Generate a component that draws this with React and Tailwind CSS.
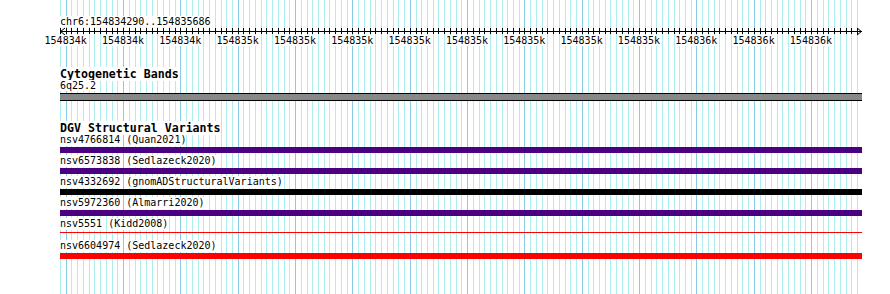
import React from "react"

// 10bp per minor gridline, 100bp per major one
const START_X = 60
const STEP = 5.734
const LINE_COUNT = 140

const tickLabels = [
  "154834k", "154834k", "154834k",
  "154835k", "154835k", "154835k", "154835k", "154835k", "154835k", "154835k", "154835k",
  "154836k", "154836k", "154836k",
]

const variants = [
  { name: "nsv4766814", desc: "(Quan2021)", bar: "bg-[#4b0082]" },
  { name: "nsv6573838", desc: "(Sedlazeck2020)", bar: "bg-[#4b0082]" },
  { name: "nsv4332692", desc: "(gnomADStructuralVariants)", bar: "bg-black" },
  { name: "nsv5972360", desc: "(Almarri2020)", bar: "bg-[#4b0082]" },
  { name: "nsv5551", desc: "(Kidd2008)", thin: true },
  { name: "nsv6604974", desc: "(Sedlazeck2020)", bar: "bg-[#ff0000]" },
]

function Grid() {
  const xs = Array.from({ length: LINE_COUNT }, (_, i) => Math.round(START_X + i * STEP))
  return (
    <svg className="absolute inset-0" width="890" height="294" shapeRendering="crispEdges">
      {xs.map((x, i) => (
        <rect key={i} x={x} y="0" width="1" height="294" fill={i % 10 === 1 ? "#88cce6" : "#aeeeee"} />
      ))}
      {/* ruler */}
      <rect x="60" y="31" width="802" height="1" fill="#000" />
      {xs.map((x, i) => (
        <rect key={"t" + i} x={x} y="28" width="1" height="6" fill="#000" />
      ))}
      <path d="M65 28 L60.5 31.5 L65 35" fill="none" stroke="#000" strokeWidth="1" shapeRendering="auto" />
      <path d="M857 28 L861.5 31.5 L857 35" fill="none" stroke="#000" strokeWidth="1" shapeRendering="auto" />
    </svg>
  )
}

export default function App() {
  return (
    <div className="relative w-[890px] h-[294px] overflow-hidden bg-white text-black font-['DejaVu_Sans_Mono',monospace] text-[10px]">
      <Grid />

      <div className="relative pl-[60px] pt-[15px]">
        {/* location */}
        <div className="leading-[13px] h-[13px]">
          <span className="bg-white">chr6:154834290..154835686</span>
        </div>

        {/* tick labels */}
        <div className="flex ml-[-23px] mt-[7px] leading-[12px] h-[12px]">
          {tickLabels.map((label, i) => (
            <div key={i} className="w-[57.34px] shrink-0 text-center">
              <span className="bg-white">{label}</span>
            </div>
          ))}
        </div>

        {/* Cytogenetic Bands */}
        <div className="mt-[21px] leading-[12px] h-[12px] font-bold text-[11.6px]">
          <span className="bg-white">Cytogenetic Bands</span>
        </div>
        <div className="leading-[12px] h-[12px]">
          <span className="bg-white">6q25.2</span>
        </div>
        <div className="mt-[1px] w-[802px] h-[8px] bg-[#888888] border-y border-black"></div>

        {/* DGV Structural Variants */}
        <div className="mt-[21px] leading-[12px] h-[12px] font-bold text-[11.6px]">
          <span className="bg-white">DGV Structural Variants</span>
        </div>
        {variants.map((v) => (
          <div key={v.name} className="mb-[2px]">
            <div className="flex leading-[12px] h-[12px]">
              <span className="bg-white">{v.name}</span>
              <span className="ml-[6px] bg-white">{v.desc}</span>
            </div>
            <div className="mt-[1px] w-[802px] h-[6px]">
              {v.thin ? (
                <div className="mt-[2px] h-px bg-[#ff0000]"></div>
              ) : (
                <div className={`h-full ${v.bar}`}></div>
              )}
            </div>
          </div>
        ))}
      </div>
    </div>
  )
}
